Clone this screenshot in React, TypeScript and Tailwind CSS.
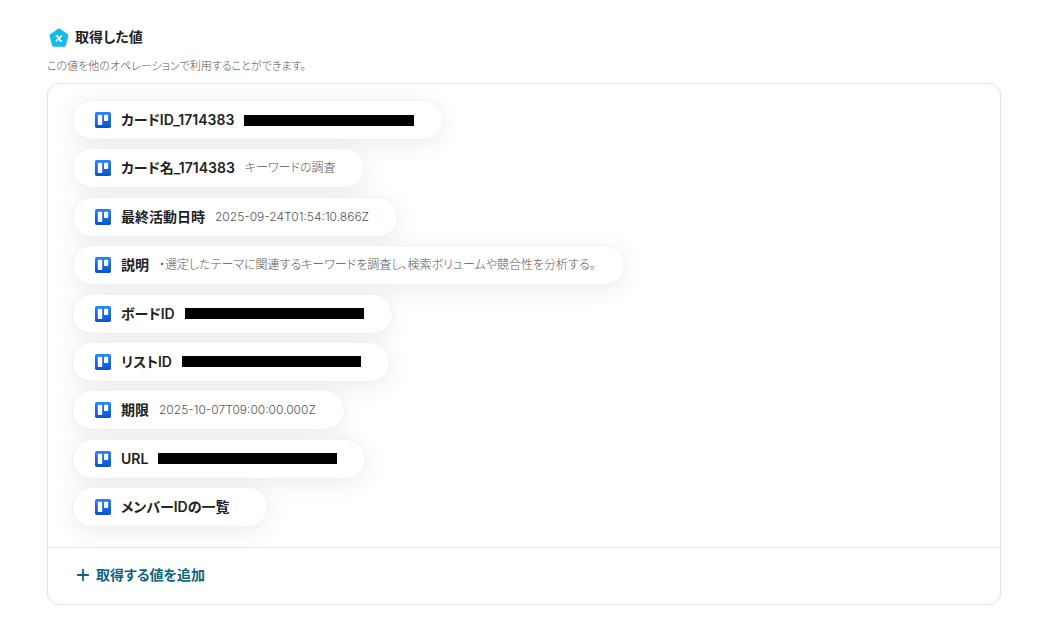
import { Plus } from 'lucide-react';

type Output = {
  label: string;
  value?: string;
  // width class of the masked value
  mask?: string;
};

const outputs: Output[] = [
  { label: 'カードID_1714383', mask: 'w-[170px]' },
  { label: 'カード名_1714383', value: 'キーワードの調査' },
  { label: '最終活動日時', value: '2025-09-24T01:54:10.866Z' },
  {
    label: '説明',
    value: '・選定したテーマに関連するキーワードを調査し、検索ボリュームや競合性を分析する。',
  },
  { label: 'ボードID', mask: 'w-[179px]' },
  { label: 'リストID', mask: 'w-[179px]' },
  { label: '期限', value: '2025-10-07T09:00:00.000Z' },
  { label: 'URL', mask: 'w-[179px]' },
  { label: 'メンバーIDの一覧' },
];

const TrelloIcon = () => (
  <svg viewBox="0 0 16 16" className="size-4 shrink-0" aria-hidden="true">
    <defs>
      <linearGradient id="trello" x1="0" y1="0" x2="0" y2="1">
        <stop offset="0" stopColor="#2684ff" />
        <stop offset="1" stopColor="#0c52cc" />
      </linearGradient>
    </defs>
    <rect width="16" height="16" rx="1.8" fill="url(#trello)" />
    <rect x="2.8" y="2.8" width="4.4" height="10.2" rx="0.8" fill="#fff" />
    <rect x="9" y="2.8" width="4.2" height="6.2" rx="0.8" fill="#fff" />
  </svg>
);

const ValueIcon = () => (
  <svg viewBox="0 0 20 20" className="size-5 shrink-0" aria-hidden="true">
    <path
      d="M10 3.2 17.8 8.6 15.2 18H4.8L2.2 8.6Z"
      fill="#12bbea"
      stroke="#12bbea"
      strokeWidth="3.4"
      strokeLinejoin="round"
    />
    <path
      d="M6.8 8.9h1.3l3.4 5h1.6M12.9 8.7 6.9 14.1"
      fill="none"
      stroke="#fff"
      strokeWidth="1.7"
      strokeLinejoin="round"
    />
  </svg>
);

const OutputPill = ({ label, value, mask }: Output) => (
  <li className="flex h-10 items-center rounded-full border border-[#f1f1f1] bg-white pr-7 pl-[22px] shadow-[0_4px_24px_rgba(0,0,0,0.08)]">
    <TrelloIcon />
    <span className="ml-[10px] text-sm font-semibold whitespace-nowrap text-[#222]">{label}</span>
    {value && (
      <span className="ml-[10px] text-xs font-light whitespace-nowrap text-[#555]">{value}</span>
    )}
    {mask && <span className={`ml-[10px] h-[11px] bg-black ${mask}`} />}
    {!value && !mask && <span className="w-[10px]" />}
  </li>
);

export default function App() {
  return (
    <main className="bg-white pt-[27px] pr-12 pb-7 pl-[47px] font-['Inter','Noto_Sans_CJK_JP',sans-serif] [font-feature-settings:'palt']">
      <header>
        <h2 className="flex items-center gap-1.5 pl-0.5 text-sm leading-5 font-semibold text-[#222]">
          <ValueIcon />
          取得した値
        </h2>
        <p className="mt-[11px] text-[11px] leading-4 font-light text-[#555]">
          この値を他のオペレーションで利用することができます。
        </p>
      </header>

      <section className="mt-[9px] overflow-hidden rounded-xl border border-[#e2e2e2]">
        <ul className="flex min-h-[463px] flex-col items-start justify-between px-6 pt-4 pb-5">
          {outputs.map((o) => (
            <OutputPill key={o.label} {...o} />
          ))}
        </ul>
        <div className="border-t border-[#e2e2e2] px-[26px] pt-[17px] pb-[19px]">
          <button
            type="button"
            className="flex items-center gap-1 text-sm leading-5 font-semibold text-[#0b6480]"
          >
            <Plus className="size-[18px]" strokeWidth={2.4} />
            取得する値を追加
          </button>
        </div>
      </section>
    </main>
  );
}
